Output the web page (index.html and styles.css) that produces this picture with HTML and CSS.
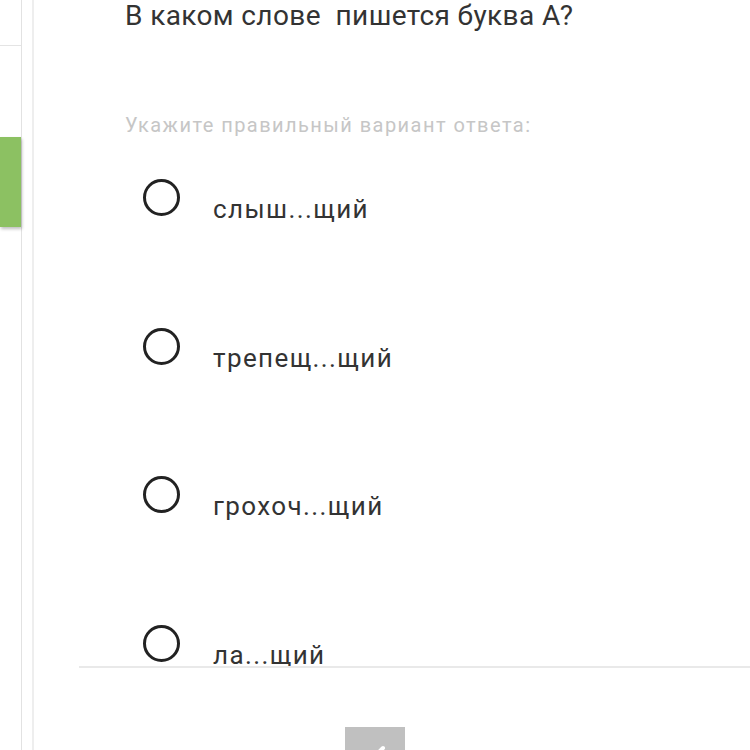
FILE: index.html
```html
<!DOCTYPE html>
<html lang="ru">
<head>
<meta charset="utf-8">
<title>Тест</title>
<link rel="stylesheet" href="styles.css">
</head>
<body>
<div class="page">
  <aside class="sidebar">
    <div class="sidebar-top"></div>
    <div class="sidebar-tab"></div>
  </aside>
  <div class="vline"></div>
  <main class="main">
    <section class="scroll">
      <h1 class="title">В каком слове&nbsp; пишется буква А?</h1>
      <p class="hint">Укажите правильный вариант ответа:</p>
      <ul class="options">
        <li class="option"><span class="radio"></span><span class="label">слыш...щий</span></li>
        <li class="option"><span class="radio"></span><span class="label">трепещ...щий</span></li>
        <li class="option"><span class="radio"></span><span class="label">грохоч...щий</span></li>
        <li class="option"><span class="radio"></span><span class="label">ла...щий</span></li>
      </ul>
    </section>
    <footer class="footer">
      <button class="btn" type="button">
        <svg width="24" height="24" viewBox="0 0 24 24"><path d="M4 20 C5 16 8 15 10 17 M10 17 L20 7" fill="none" stroke="#fff" stroke-width="4" stroke-linecap="round"/></svg>
      </button>
    </footer>
  </main>
</div>
</body>
</html>
```
FILE: styles.css
```css
* { box-sizing: border-box; }
html, body { margin: 0; padding: 0; background: #fff; }
body { width: 750px; height: 750px; overflow: hidden; font-family: Roboto, "Liberation Sans", sans-serif; }
.page { display: flex; height: 750px; }
.sidebar { width: 22px; flex: none; border-right: 1px solid #e2e2e2; display: flex; flex-direction: column; }
.sidebar-top { height: 46px; border-bottom: 1px solid #e4e4e4; flex: none; }
.sidebar-tab { margin-top: 91px; height: 90px; width: 21px; background: #8cc162; box-shadow: 1px 2px 3px rgba(0,0,0,0.25); }
.vline { width: 2px; margin-left: 10px; background: #eeeeee; flex: none; }
.main { flex: 1; display: flex; flex-direction: column; min-width: 0; }
.scroll { height: 666px; overflow: hidden; padding-left: 91px; flex: none; }
.title { margin: 0; font-weight: 400; font-size: 28px; letter-spacing: 0.38px; line-height: 31px; color: #333; white-space: pre; }
.hint { margin: 80.5px 0 0 0; font-size: 20px; letter-spacing: 1.45px; line-height: 26px; color: #c6c6c6; }
.options { list-style: none; margin: 0; padding: 0; }
.option { display: flex; align-items: flex-start; height: 148.5px; }
.option:first-child { margin-top: 41.5px; }
.radio { width: 37px; height: 37px; margin-left: 18px; border: 3.5px solid #222; border-radius: 50%; flex: none; }
.label { margin-left: 33px; margin-top: 15px; font-size: 26px; letter-spacing: 1.4px; line-height: 30px; color: #333; }
.footer { border-top: 2px solid #e9e9e9; margin-left: 45px; flex: 1; display: flex; align-items: flex-start; padding-left: 266px; }
.btn { margin-top: 59px; width: 60px; height: 60px; border: 0; padding: 14px 0 0 0; background: #c0c0c0; display: flex; justify-content: center; align-items: flex-start; }
```
